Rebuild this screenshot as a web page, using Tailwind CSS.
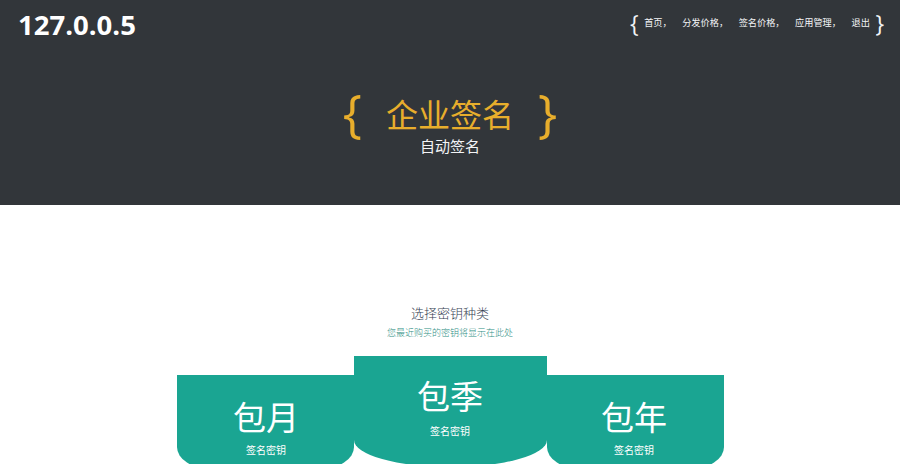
<!DOCTYPE html>
<html lang="zh-CN">
<head>
    <meta charset="UTF-8">
    <title>企业签名</title>
    <script src="https://cdn.jsdelivr.net/npm/@tailwindcss/browser@4"></script>
</head>
<body class="h-[464px] overflow-hidden bg-white font-['Open_Sans','Noto_Sans_CJK_SC',sans-serif]">
<!-- Header -->
<header class="h-[205px] bg-[#32363a] text-white">
    <div class="flex items-start justify-between pl-[18px] pr-[16px]">
        <a class="mt-[7px] text-[27.5px] leading-[36px] font-bold" href="#">127.0.0.5</a>
        <nav class="mt-[9px] flex items-center gap-[10.5px] text-[9.2px] text-gray-100">
            <span class="mr-[-5px] text-[23px] leading-[28px]">{</span>
            <a href="#">首页，</a>
            <a href="#">分发价格，</a>
            <a href="#">签名价格，</a>
            <a href="#">应用管理，</a>
            <a href="#">退出</a>
            <span class="ml-[-5px] text-[23px] leading-[28px]">}</span>
        </nav>
    </div>
    <div class="mt-[37px] flex flex-col items-center">
        <div class="flex h-[64px] items-center gap-[24px] text-[#e8ae2c]">
            <span class="text-[51px] leading-[64px]">{</span>
            <h1 class="mt-[5px] text-[32px] leading-[44px]">企业签名</h1>
            <span class="text-[51px] leading-[64px]">}</span>
        </div>
        <p class="-mt-[9px] text-[15px] leading-[22px] text-gray-100">自动签名</p>
    </div>
</header>

<!-- Key types -->
<section class="flex flex-col items-center pt-[99px]">
    <h2 class="text-[13px] leading-[18px] font-light text-gray-700">选择密钥种类</h2>
    <p class="mt-[4px] text-[9px] leading-[14px] font-light text-[#2f8f84]">您最近购买的密钥将显示在此处</p>
    <div class="mt-[16px] flex items-start text-white">
        <div class="mt-[19px] flex h-[94px] w-[177px] flex-col items-center rounded-b-[34px_22px] bg-[#1aa592] pt-[21px] pl-[2px]">
            <span class="text-[33px] leading-[44px]">包月</span>
            <span class="mt-[3px] text-[10px] leading-[14px]">签名密钥</span>
        </div>
        <div class="z-10 flex h-[111px] w-[193px] flex-col items-center rounded-b-[96px_27px] bg-[#1aa592] pt-[19px]">
            <span class="text-[33px] leading-[44px]">包季</span>
            <span class="mt-[5px] text-[10px] leading-[14px]">签名密钥</span>
        </div>
        <div class="mt-[19px] flex h-[94px] w-[177px] flex-col items-center rounded-b-[34px_22px] bg-[#1aa592] pt-[21px] pr-[2px]">
            <span class="text-[33px] leading-[44px]">包年</span>
            <span class="mt-[3px] text-[10px] leading-[14px]">签名密钥</span>
        </div>
    </div>
</section>
</body>
</html>
